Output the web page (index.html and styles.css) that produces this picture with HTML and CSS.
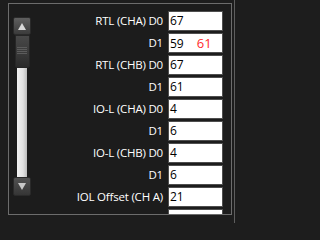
FILE: index.html
```html
<!DOCTYPE html>
<html>
<head>
<meta charset="utf-8">
<link rel="stylesheet" href="styles.css">
</head>
<body>
<div class="page">
  <div class="frame">
    <div class="scrollbar">
      <div class="sb-btn"><span class="tri-up"></span></div>
      <div class="thumb"><span class="grip"></span></div>
      <div class="track"></div>
      <div class="sb-btn down"><span class="tri-down"></span></div>
    </div>
    <div class="form">
      <div class="label">RTL (CHA) D0</div><div class="field">67</div>
      <div class="label">D1</div><div class="field">59<span class="alt">61</span></div>
      <div class="label">RTL (CHB) D0</div><div class="field">67</div>
      <div class="label">D1</div><div class="field">61</div>
      <div class="label">IO-L (CHA) D0</div><div class="field">4</div>
      <div class="label">D1</div><div class="field">6</div>
      <div class="label">IO-L (CHB) D0</div><div class="field">4</div>
      <div class="label">D1</div><div class="field">6</div>
      <div class="label">IOL Offset (CH A)</div><div class="field">21</div>
      <div class="label">IOL Offset (CH B)</div><div class="field">21</div>
    </div>
  </div>
  <div class="side-line"></div>
</div>
</body>
</html>
```
FILE: styles.css
```css
html, body {
  margin: 0;
  padding: 0;
  background: #1d1d1d;
}
body {
  width: 239px;
  height: 223px;
  overflow: hidden;
  font-family: "Open Sans", "Liberation Sans", sans-serif;
  font-size: 11.5px;
  letter-spacing: -0.2px;
}
.page {
  display: flex;
  height: 223px;
}
.frame {
  margin: 3px 0 0 8px;
  width: 222px;
  height: 210px;
  border: 1px solid #6c6c6c;
  overflow: hidden;
  display: flex;
  background: #1c1c1c;
}
.side-line {
  margin-left: 2px;
  width: 1px;
  height: 223px;
  background: #5e5e5e;
}
.scrollbar {
  margin: 13px 0 0 4px;
  width: 18px;
  display: flex;
  flex-direction: column;
  align-items: center;
  flex: none;
}
.sb-btn {
  width: 18px;
  height: 18px;
  box-sizing: border-box;
  border-radius: 2px;
  background: linear-gradient(#5f5f5f, #3b3b3b);
  border: 1px solid #2a2a2a;
  display: flex;
  align-items: center;
  justify-content: center;
}
.sb-btn.down {
  height: 19px;
  background: linear-gradient(#525252, #353535);
}
.tri-up {
  width: 0;
  height: 0;
  border-left: 4px solid transparent;
  border-right: 4px solid transparent;
  border-bottom: 7px solid #d8d8d8;
}
.tri-down {
  width: 0;
  height: 0;
  border-left: 4px solid transparent;
  border-right: 4px solid transparent;
  border-top: 7px solid #c8c8c8;
}
.thumb {
  width: 15px;
  height: 33px;
  box-sizing: border-box;
  background: linear-gradient(#484848, #383838 60%, #2a2a2a);
  border: 1px solid #262626;
  border-radius: 0 0 2px 2px;
  display: flex;
  justify-content: center;
  padding-top: 11px;
}
.grip {
  width: 10px;
  height: 8px;
  background: repeating-linear-gradient(#5c5c5c 0 1px, transparent 1px 2px);
}
.track {
  width: 10px;
  height: 109px;
  background: linear-gradient(90deg, #f2f2f2, #e2e2e2 60%, #bdbdbd);
}
.form {
  flex: 1;
  padding: 7px 8px 0 0;
  display: grid;
  grid-template-columns: 1fr 55px;
  grid-auto-rows: 20px;
  column-gap: 5px;
  row-gap: 2px;
  align-content: start;
}
.label {
  color: #ffffff;
  text-align: right;
  line-height: 20px;
  white-space: nowrap;
}
.field {
  box-sizing: border-box;
  background: #ffffff;
  border: 1px solid #4e4e4e;
  color: #000000;
  font-size: 12px;
  letter-spacing: 0;
  line-height: 18px;
  padding-left: 1px;
  white-space: nowrap;
}
.alt {
  color: #ff2b2b;
  font-size: 13px;
  margin-left: 13px;
}
```
